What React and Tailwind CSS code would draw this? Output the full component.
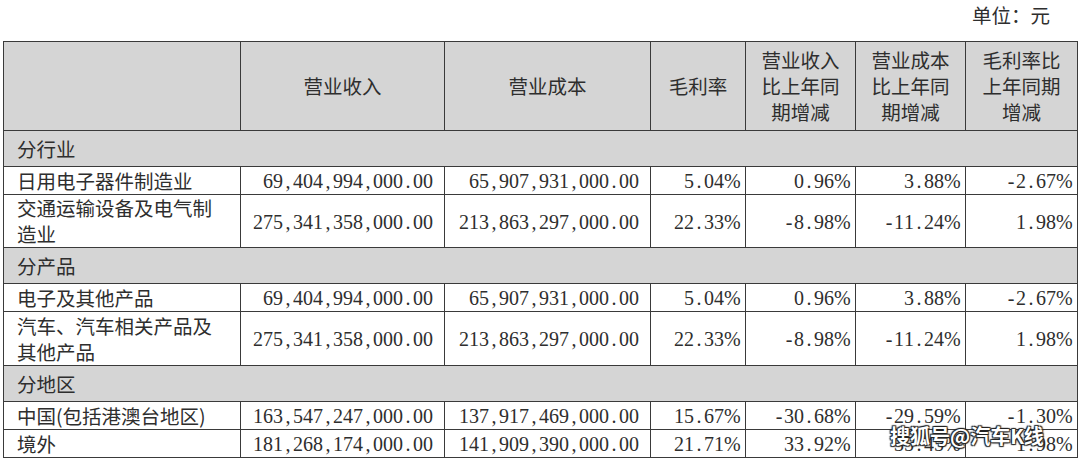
import React from "react";

const rows = [
  { section: "分行业" },
  {
    name: "日用电子器件制造业",
    vals: ["69,404,994,000.00", "65,907,931,000.00", "5.04%", "0.96%", "3.88%", "-2.67%"],
    h: "h-[28px]",
  },
  {
    name: ["交通运输设备及电气制", "造业"],
    vals: ["275,341,358,000.00", "213,863,297,000.00", "22.33%", "-8.98%", "-11.24%", "1.98%"],
    h: "h-[53px]",
  },
  { section: "分产品" },
  {
    name: "电子及其他产品",
    vals: ["69,404,994,000.00", "65,907,931,000.00", "5.04%", "0.96%", "3.88%", "-2.67%"],
    h: "h-[27px]",
  },
  {
    name: ["汽车、汽车相关产品及", "其他产品"],
    vals: ["275,341,358,000.00", "213,863,297,000.00", "22.33%", "-8.98%", "-11.24%", "1.98%"],
    h: "h-[54px]",
  },
  { section: "分地区" },
  {
    name: "中国(包括港澳台地区)",
    vals: ["163,547,247,000.00", "137,917,469,000.00", "15.67%", "-30.68%", "-29.59%", "-1.30%"],
    h: "h-[27px]",
  },
  {
    name: "境外",
    vals: ["181,268,174,000.00", "141,909,390,000.00", "21.71%", "33.92%", "35.45%", "1.98%"],
    h: "h-[27px]",
  },
];

const headers = [
  ["营业收入"],
  ["营业成本"],
  ["毛利率"],
  ["营业收入", "比上年同", "期增减"],
  ["营业成本", "比上年同", "期增减"],
  ["毛利率比", "上年同期", "增减"],
];

// SimSun-like half width digits: every char gets a 10px cell
const Num = ({ v }) => (
  <span className="inline-flex font-['Liberation_Serif',serif] text-[20px]">
    {[...v].map((c, i) => (
      <span key={i} className="inline-block w-[10px] text-center">
        {c}
      </span>
    ))}
  </span>
);

const cell = "border border-[#3a3a3a] align-middle";

const App = () => {
  return (
    <div className="relative w-[1080px] h-[460px] overflow-hidden bg-white px-[3px] text-[#2e2e2e] font-['Noto_Sans_CJK_SC','Noto_Sans',sans-serif] text-[19.5px] leading-[26px]">
      {/* unit line */}
      <div className="h-[41px] flex justify-end pr-[27px] pt-[2px] leading-[26px]">
        单位：元
      </div>

      <table className="table-fixed border-collapse w-[1074px]">
        <colgroup>
          <col className="w-[237px]" />
          <col className="w-[204px]" />
          <col className="w-[206px]" />
          <col className="w-[95px]" />
          <col className="w-[110px]" />
          <col className="w-[110px]" />
          <col className="w-[112px]" />
        </colgroup>
        <thead>
          <tr className="h-[89px] bg-[#d5d5d5]">
            <th className={cell}></th>
            {headers.map((lines, i) => (
              <th key={i} className={`${cell} font-normal text-center`}>
                {lines.map((l, j) => (
                  <div key={j}>{l}</div>
                ))}
              </th>
            ))}
          </tr>
        </thead>
        <tbody>
          {rows.map((r, i) =>
            r.section ? (
              <tr key={i} className="h-[36px] bg-[#d5d5d5]">
                <td colSpan={7} className={`${cell} pl-[13px]`}>
                  {r.section}
                </td>
              </tr>
            ) : (
              <tr key={i} className={r.h}>
                <td className={`${cell} pl-[13px]`}>
                  {Array.isArray(r.name)
                    ? r.name.map((n, j) => <div key={j}>{n}</div>)
                    : r.name}
                </td>
                {r.vals.map((v, j) => (
                  <td key={j} className={`${cell} text-right pr-[11px]`}>
                    <Num v={v} />
                  </td>
                ))}
              </tr>
            )
          )}
        </tbody>
      </table>

      {/* watermark */}
      <div className="absolute left-[890px] top-[422px] font-bold text-[20px] leading-[28px] text-white [text-shadow:1px_1px_1px_#222,-1px_-1px_1px_#222,1px_-1px_1px_#222,-1px_1px_1px_#222]">
        搜狐号@汽车K线
      </div>
    </div>
  );
};

export default App;
